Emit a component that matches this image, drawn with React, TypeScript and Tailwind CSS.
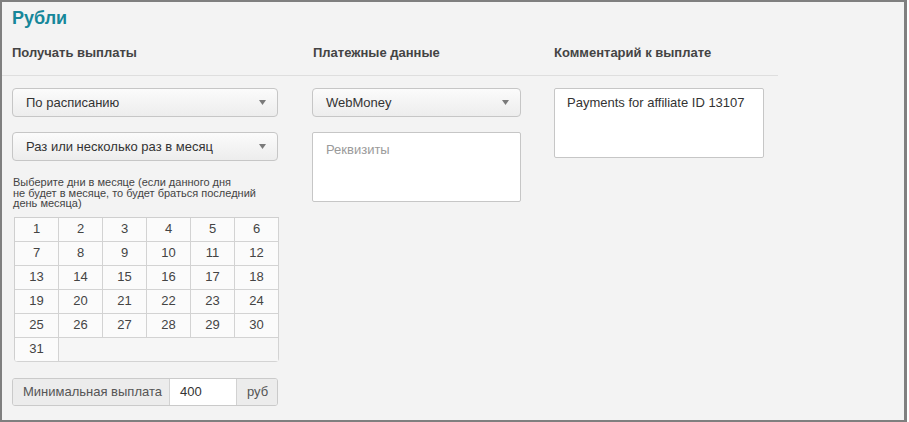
import React from "react";

const days = Array.from({ length: 31 }, (_, i) => i + 1);

function SelectBox({ value, className }: { value: string; className?: string }) {
  return (
    <div
      className={`flex items-center justify-between h-[29px] pl-[13px] pr-[11px] rounded-[4px] border border-[#c6c6c6] bg-gradient-to-b from-[#fbfbfb] to-[#ededed] text-[13px] text-[#333] ${className ?? ""}`}
    >
      <span>{value}</span>
      <svg width="7" height="5" viewBox="0 0 7 5">
        <path d="M0 0 L7 0 L3.5 5 Z" fill="#7a7a7a" />
      </svg>
    </div>
  );
}

export default function App() {
  return (
    <div
      className="w-[907px] h-[422px] bg-[#f3f3f3] border-[#7f7f7f] border-t-2 border-l-2 border-r-[3px] border-b-2 overflow-hidden"
      style={{ fontFamily: '"Liberation Sans", Arial, sans-serif' }}
    >
      <h1 className="pl-[10px] pt-[5px] text-[18px] leading-[22px] font-bold text-[#16879a]">Рубли</h1>

      {/* Column headers */}
      <div className="w-[776px] mt-[16px] pb-[14px] border-b border-[#dedede] flex pl-[10px] text-[13px] leading-[16px] font-bold text-[#444]">
        <div className="w-[300px]">Получать выплаты</div>
        <div className="w-[242px] pl-[1px]">Платежные данные</div>
        <div>Комментарий к выплате</div>
      </div>

      <div className="flex pl-[10px] pt-[12px]">
        {/* Column 1 */}
        <div className="w-[266px] flex flex-col">
          <SelectBox value="По расписанию" />
          <SelectBox value="Раз или несколько раз в месяц" className="mt-[15px]" />

          <p className="mt-[16px] ml-[1px] text-[11px] leading-[10.5px] text-[#444]">
            Выберите дни в месяце (если данного дня
            <br />
            не будет в месяце, то будет браться последний
            <br />
            день месяца)
          </p>

          <div className="mt-[8px] ml-[2px] w-[265px] grid grid-cols-6 border-l border-t border-[#cfcfcf] rounded-b-[4px] overflow-hidden bg-[#f7f7f7]">
            {days.map((d) => (
              <div
                key={d}
                className="h-[24px] flex items-center justify-center border-r border-b border-[#d3d3d3] bg-[#fbfbfb] text-[13px] text-[#444]"
              >
                {d}
              </div>
            ))}
            <div className="col-span-5 h-[24px] border-r border-b border-[#d3d3d3] bg-[#f6f6f6]" />
          </div>

          <div className="mt-[16px] flex h-[28px] border border-[#cacaca] rounded-[3px] overflow-hidden text-[13px]">
            <div className="w-[157px] flex items-center pl-[10px] bg-[#ececec] text-[#555] border-r border-[#d2d2d2]">
              Минимальная выплата
            </div>
            <div className="w-[67px] flex items-center pl-[10px] bg-white text-[#333] border-r border-[#d2d2d2]">400</div>
            <div className="flex-1 flex items-center pl-[10px] bg-[#ececec] text-[#555]">руб</div>
          </div>
        </div>

        {/* Column 2 */}
        <div className="w-[209px] ml-[34px] flex flex-col">
          <SelectBox value="WebMoney" />
          <textarea
            readOnly
            placeholder="Реквизиты"
            className="mt-[15px] h-[70px] resize-none border border-[#c6c6c6] rounded-[2px] bg-white px-[13px] pt-[9px] text-[13px] leading-[16px] placeholder:text-[#9a9a9a] outline-none"
          />
        </div>

        {/* Column 3 */}
        <div className="w-[210px] ml-[33px]">
          <textarea
            readOnly
            value="Payments for affiliate ID 13107"
            className="w-full h-[70px] resize-none border border-[#c6c6c6] rounded-[2px] bg-white px-[12px] pt-[6px] text-[13px] leading-[16px] text-[#333] outline-none"
          />
        </div>
      </div>
    </div>
  );
}
